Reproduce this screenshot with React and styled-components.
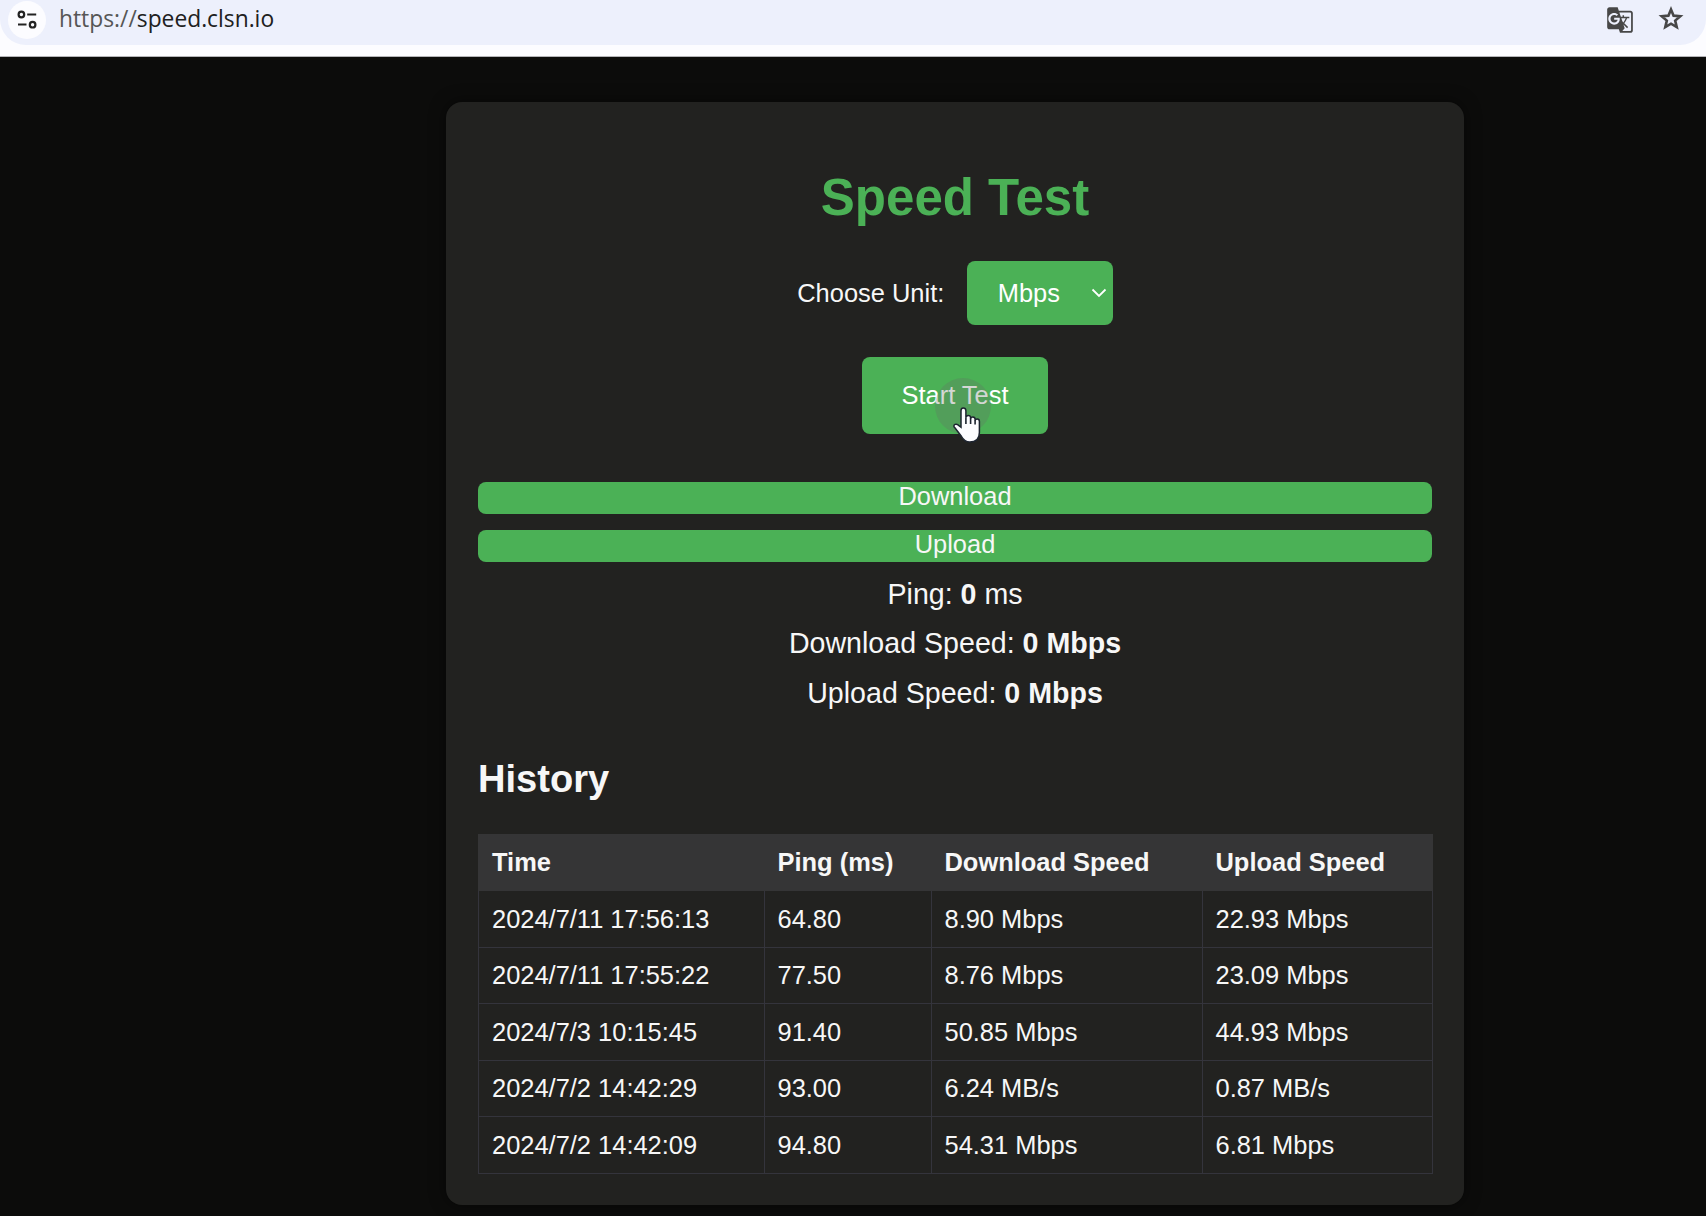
import React, { useState } from "react";
import styled, { createGlobalStyle } from "styled-components";
import { MdGTranslate } from "react-icons/md";

const GlobalStyle = createGlobalStyle`
  * { box-sizing: border-box; }
  body {
    margin: 0;
    background: #0c0c0b;
    color: #f7f7f7;
    font-family: "Liberation Sans", Arial, sans-serif;
    font-size: 25.45px;
    overflow: hidden;
  }
`;

const Screen = styled.div`
  height: 1216px;
  display: flex;
  flex-direction: column;
`;

const BrowserBar = styled.header`
  flex: none;
  height: 57px;
  background: #fcfcff;
  border-bottom: 1px solid #b4b4b8;
`;

const AddressBar = styled.div`
  height: 45px;
  padding: 0 20px 6px 8px;
  display: flex;
  align-items: center;
  background: #edf0fc;
  border-radius: 0 0 26px 26px;
`;

const SiteInfo = styled.button`
  width: 38px;
  height: 38px;
  padding: 0;
  border: 0;
  border-radius: 50%;
  background: #fcfcff;
  display: grid;
  place-items: center;
`;

const Url = styled.div`
  flex: 1;
  margin-left: 13px;
  padding-bottom: 2px;
  font: 22.8px/36px "Open Sans", "Noto Sans", sans-serif;
  color: #202020;
  white-space: nowrap;
`;

const Scheme = styled.span`
  color: #565656;
`;

const BarIcons = styled.div`
  display: flex;
  align-items: center;
  gap: 22px;
  color: #474747;
`;

const Star = styled.svg`
  margin-bottom: 2px;
`;

const Page = styled.main`
  flex: 1;
  padding: 45px 0 0 446px;
`;

const Card = styled.section`
  width: 1018px;
  height: 1103px;
  padding: 67px 32px 0;
  background: #222220;
  border-radius: 16px;
  box-shadow: 0 0 16px rgba(0, 0, 0, 0.5);
  display: flex;
  flex-direction: column;
`;

const Title = styled.h1`
  margin: 0;
  color: #4bb156;
  font-size: 51px;
  line-height: 58px;
  text-align: center;
`;

const UnitRow = styled.div`
  margin-top: 34px;
  display: flex;
  justify-content: center;
  align-items: center;
  gap: 22.5px;
`;

const UnitSelect = styled.button`
  width: 146px;
  height: 64px;
  padding: 0 6px 0 31px;
  border: 0;
  border-radius: 8px;
  background: #4bb156;
  color: #fff;
  font: inherit;
  display: flex;
  align-items: center;
  justify-content: space-between;
`;

const StartButton = styled.button`
  position: relative;
  align-self: center;
  width: 186px;
  height: 77px;
  margin-top: 32px;
  padding: 0;
  border: 0;
  border-radius: 8px;
  background: #4bb156;
  color: #fff;
  font: inherit;
`;

const ClickHalo = styled.span`
  position: absolute;
  left: 73px;
  top: 21px;
  width: 56px;
  height: 56px;
  border-radius: 50%;
  background: rgba(100, 110, 100, 0.28);
`;

const Pointer = styled.svg`
  position: absolute;
  left: 90px;
  top: 49px;
`;

const Bars = styled.div`
  margin-top: 48px;
  display: grid;
  gap: 16px;
`;

const Bar = styled.div`
  height: 32px;
  border-radius: 8px;
  background: #4bb156;
  line-height: 29px;
  text-align: center;
`;

const Stats = styled.div`
  margin-top: 8px;
  font-size: 28.6px;
  line-height: 49.3px;
  text-align: center;
`;

const Stat = styled.div``;

const HistoryTitle = styled.h2`
  margin: 39.6px 0 32.2px;
  font-size: 38.1px;
  line-height: 44px;
`;

const HistoryTable = styled.table`
  width: 954px;
  table-layout: fixed;
  border-collapse: collapse;
`;

const Column = styled.col`
  width: ${(p) => p.$width}px;
`;

const Cell = styled.td`
  height: 56.5px;
  padding: 0 13px;
  border: 1px solid #34343c;
  line-height: 30px;
  white-space: nowrap;
`;

const HeadCell = styled(Cell).attrs({ as: "th", scope: "col" })`
  border-color: #353536;
  background: #353536;
  text-align: left;
`;

const columns = [
  ["Time", 285.5],
  ["Ping (ms)", 167],
  ["Download Speed", 271],
  ["Upload Speed", 230.5],
];

const records = [
  ["2024/7/11 17:56:13", "64.80", "8.90 Mbps", "22.93 Mbps"],
  ["2024/7/11 17:55:22", "77.50", "8.76 Mbps", "23.09 Mbps"],
  ["2024/7/3 10:15:45", "91.40", "50.85 Mbps", "44.93 Mbps"],
  ["2024/7/2 14:42:29", "93.00", "6.24 MB/s", "0.87 MB/s"],
  ["2024/7/2 14:42:09", "94.80", "54.31 Mbps", "6.81 Mbps"],
];

const SettingsIcon = () => (
  <svg width="20" height="20" viewBox="0 0 20 20" fill="none" stroke="#222" strokeWidth="2.2">
    <circle cx="4.4" cy="4.5" r="2.8" />
    <path d="M10.2 4.5h9M1 14.5h8.5" />
    <circle cx="15.6" cy="14.7" r="2.8" />
  </svg>
);

const StarIcon = () => (
  <Star width="30" height="30" viewBox="0 0 24 24" fill="none" stroke="currentColor" strokeWidth="2.1">
    <path d="m12 4.4 2.07 4.93 5.33.46-4.05 3.5 1.22 5.21L12 15.73l-4.57 2.77 1.22-5.21-4.05-3.5 5.33-.46Z" />
  </Star>
);

const Chevron = () => (
  <svg width="16" height="12" viewBox="0 0 16 12" fill="none" stroke="#fff" strokeWidth="1.8">
    <path d="M1.5 2.5 8 9l6.5-6.5" />
  </svg>
);

const HandPointer = () => (
  <Pointer width="31" height="38" viewBox="0 0 31 38">
    <path
      d="M11.3 2C9.6 2 9 3.2 9 4.7v16.6l-3.4-2.6c-1.6-1.2-4-.1-3.7 1.6.1.6.7 1.2 1.2 1.7l6.4 8.5c2 3.6 4.2 5.5 8.2 5.5 6.2 0 9.7-3.5 9.7-9.6V15.2c0-3-4.3-3-4.3-.2v-1.8c0-2.9-4.5-2.9-4.5-.2v-1.2c0-2.9-4.7-2.9-4.7-.1V4.7C13.9 3.2 13 2 11.3 2Z"
      fill="#fcfcff"
      stroke="#1d2430"
      strokeWidth="1.5"
    />
    <path d="M13.9 11.5V18M18.6 12.5V18M23.1 14.5V18.5" stroke="#1d2430" strokeWidth="1.6" />
  </Pointer>
);

export default function App() {
  const [unit, setUnit] = useState("Mbps");
  return (
    <Screen>
      <GlobalStyle />
      <BrowserBar>
        <AddressBar>
          <SiteInfo aria-label="Site information">
            <SettingsIcon />
          </SiteInfo>
          <Url>
            <Scheme>https://</Scheme>speed.clsn.io
          </Url>
          <BarIcons>
            <MdGTranslate size={28} />
            <StarIcon />
          </BarIcons>
        </AddressBar>
      </BrowserBar>
      <Page>
        <Card>
          <Title>Speed Test</Title>
          <UnitRow>
            <span>Choose Unit:</span>
            <UnitSelect onClick={() => setUnit(unit === "Mbps" ? "MB/s" : "Mbps")}>
              {unit}
              <Chevron />
            </UnitSelect>
          </UnitRow>
          <StartButton>
            Start Test
            <ClickHalo />
            <HandPointer />
          </StartButton>
          <Bars>
            <Bar>Download</Bar>
            <Bar>Upload</Bar>
          </Bars>
          <Stats>
            <Stat>Ping: <b>0</b> ms</Stat>
            <Stat>Download Speed: <b>0 {unit}</b></Stat>
            <Stat>Upload Speed: <b>0 {unit}</b></Stat>
          </Stats>
          <HistoryTitle>History</HistoryTitle>
          <HistoryTable>
            <colgroup>
              {columns.map(([name, width]) => (
                <Column key={name} $width={width} />
              ))}
            </colgroup>
            <thead>
              <tr>
                {columns.map(([name]) => (
                  <HeadCell key={name}>{name}</HeadCell>
                ))}
              </tr>
            </thead>
            <tbody>
              {records.map((record) => (
                <tr key={record[0]}>
                  {record.map((value, i) => (
                    <Cell key={i}>{value}</Cell>
                  ))}
                </tr>
              ))}
            </tbody>
          </HistoryTable>
        </Card>
      </Page>
    </Screen>
  );
}
